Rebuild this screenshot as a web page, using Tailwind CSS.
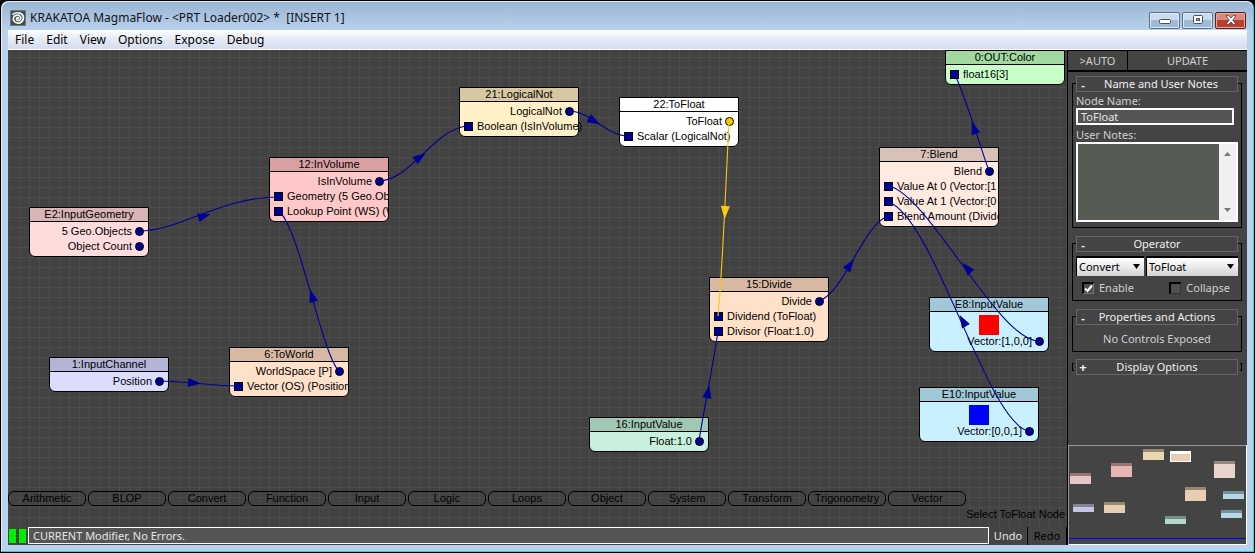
<!DOCTYPE html>
<html lang="en">
<head>
<meta charset="utf-8">
<title>KRAKATOA MagmaFlow</title>
<script src="https://cdn.jsdelivr.net/npm/@tailwindcss/browser@4"></script>
</head>
<body class="bg-black font-['Noto_Sans',sans-serif] text-[11px] leading-4">
<div class="flex h-screen flex-col rounded-t-lg border border-black border-r-[#101010] bg-[#bad2ec] shadow-[inset_-1px_-1px_0_#30c8e4,inset_1px_1px_0_#e4eefa]">

  <!-- Title bar -->
  <header class="mx-px mt-px flex h-7 shrink-0 items-center rounded-t-lg bg-linear-to-b from-[#9bb5d4] to-[#b9d1eb] pr-[7px] pl-2">
    <svg class="mt-1 size-4 shrink-0" viewBox="0 0 16 16">
      <rect width="16" height="16" rx="1.5" fill="#3f4d50"/>
      <rect x=".5" y=".5" width="15" height="15" rx="1.5" fill="none" stroke="#6d7c80"/>
      <path d="M3 4.200C6.500 1.500 13.600 2.700 13.400 7.900 13.200 13.200 7.500 14.500 4.500 11.600 2 9 3.700 5.200 7.400 5.200 10.500 5.200 11.600 8 10.200 9.800 8.900 11.300 6.300 10.600 6.500 8.800 6.700 7.500 8.200 7.400 8.500 8.400" fill="none" stroke="#f4f8f8" stroke-width="1.700" stroke-linecap="round"/>
    </svg>
    <h1 class="mt-1 ml-1 flex-1 text-[12px] whitespace-pre text-[#101418]">KRAKATOA MagmaFlow - &lt;PRT Loader002&gt; *  [INSERT 1]</h1>
    <div class="mt-2 flex gap-[2px]">
      <button aria-label="Minimize" class="flex h-[17px] w-[31px] items-center justify-center rounded-[2px] border border-[#5c7088] bg-linear-to-b from-[#c9dbee] from-50% to-[#9fb9d6] to-50% shadow-[inset_0_0_0_1px_#dce9f6]"><svg width="12" height="10"><rect x=".5" y="4.500" width="11" height="4" rx="1" fill="#fff" stroke="#4a5262"/></svg></button>
      <button aria-label="Maximize" class="flex h-[17px] w-[31px] items-center justify-center rounded-[2px] border border-[#5c7088] bg-linear-to-b from-[#c9dbee] from-50% to-[#9fb9d6] to-50% shadow-[inset_0_0_0_1px_#dce9f6]"><svg width="12" height="10"><rect x="1.500" y=".5" width="9" height="8" rx="1" fill="#fff" stroke="#4a5262"/><rect x="4.500" y="3.500" width="3" height="2" fill="#a9bfd9" stroke="#4a5262"/></svg></button>
      <button aria-label="Close" class="flex h-[17px] w-[31px] items-center justify-center rounded-[2px] border border-[#5a1d1d] bg-linear-to-b from-[#d98a7c] from-50% to-[#bf3d29] to-50% shadow-[inset_0_0_0_1px_#e8aa9e]"><svg width="12" height="10" viewBox="0 0 12 10"><path d="M1 .7h3l2 2.300 2-2.300h3L7.800 5l3.200 4.300H8L6 7 4 9.300H1L4.200 5z" fill="#fff" stroke="#4a4a5a" stroke-width=".9"/></svg></button>
    </div>
  </header>

  <div class="mr-[7px] mb-[7px] ml-[7px] flex min-h-0 flex-1 flex-col">
    <!-- Menu -->
    <nav class="flex h-5 shrink-0 items-center gap-3 border-b border-white bg-linear-to-b from-white via-[#e4eaf5] to-[#d5dcee] pl-[7px] text-[12px] text-black">
      <button>File</button><button>Edit</button><button>View</button><button>Options</button><button>Expose</button><button>Debug</button>
    </nav>

    <div class="flex min-h-0 flex-1">
      <main class="flex min-w-0 flex-1 flex-col bg-[#444]">
        <!-- Flow canvas -->
        <section aria-label="Flow" class="relative flex min-h-0 flex-1 flex-col justify-end overflow-hidden bg-[#424242] bg-[linear-gradient(#4c4c4c_1px,transparent_1px),linear-gradient(90deg,#4c4c4c_1px,transparent_1px)] bg-size-[10px_10px] bg-position-[1px_7px] font-['Liberation_Sans',Arial,sans-serif] text-black">

          <article class="absolute top-[157px] left-[21px] w-[120px] overflow-hidden rounded-b-md border border-black bg-[#ffdcdc] leading-[13px]">
            <h2 class="h-[14px] border-b border-black bg-[#d8b4b4] text-center">E2:InputGeometry</h2>
            <div class="py-[2px] whitespace-nowrap">
              <div class="flex h-[15px] items-center justify-end gap-[3px] pr-1"><span class="pb-px">5 Geo.Objects</span><i class="size-[9px] rounded-full border border-black bg-[#000096]"></i></div>
              <div class="flex h-[15px] items-center justify-end gap-[3px] pr-1"><span class="pb-px">Object Count</span><i class="size-[9px] rounded-full border border-black bg-[#000096]"></i></div>
            </div>
          </article>

          <article class="absolute top-[107px] left-[261px] w-[120px] overflow-hidden rounded-b-md border border-black bg-[#ffc8c8] leading-[13px]">
            <h2 class="h-[14px] border-b border-black bg-[#d8a0a0] text-center">12:InVolume</h2>
            <div class="py-[2px] whitespace-nowrap">
              <div class="flex h-[15px] items-center justify-end gap-[3px] pr-1"><span class="pb-px">IsInVolume</span><i class="size-[9px] rounded-full border border-black bg-[#000096]"></i></div>
              <div class="flex h-[15px] items-center gap-1 pl-1"><i class="size-[9px] shrink-0 border border-black bg-[#000096]"></i><span class="pb-px">Geometry (5 Geo.Obj</span></div>
              <div class="flex h-[15px] items-center gap-1 pl-1"><i class="size-[9px] shrink-0 border border-black bg-[#000096]"></i><span class="pb-px">Lookup Point (WS) (W</span></div>
            </div>
          </article>

          <article class="absolute top-[37px] left-[451px] w-[120px] rounded-b-md border border-black bg-[#fff0c8] leading-[13px]">
            <h2 class="h-[14px] border-b border-black bg-[#d8c8a0] text-center">21:LogicalNot</h2>
            <div class="py-[2px] whitespace-nowrap">
              <div class="flex h-[15px] items-center justify-end gap-[3px] pr-1"><span class="pb-px">LogicalNot</span><i class="size-[9px] rounded-full border border-black bg-[#000096]"></i></div>
              <div class="flex h-[15px] items-center gap-1 pl-1"><i class="size-[9px] shrink-0 border border-black bg-[#000096]"></i><span class="pb-px">Boolean (IsInVolume)</span></div>
            </div>
          </article>

          <article class="absolute top-[47px] left-[611px] w-[120px] overflow-hidden rounded-b-md border border-black bg-white leading-[13px]">
            <h2 class="h-[14px] border-b border-black text-center">22:ToFloat</h2>
            <div class="py-[2px] whitespace-nowrap">
              <div class="flex h-[15px] items-center justify-end gap-[3px] pr-1"><span class="pb-px">ToFloat</span><i class="size-[9px] rounded-full border border-black bg-[#ffc80a]"></i></div>
              <div class="flex h-[15px] items-center gap-1 pl-1"><i class="size-[9px] shrink-0 border border-black bg-[#000096]"></i><span class="pb-px">Scalar (LogicalNot)</span></div>
            </div>
          </article>

          <article class="absolute top-[307px] left-[41px] w-[120px] overflow-hidden rounded-b-md border border-black bg-[#dcdcff] leading-[13px]">
            <h2 class="h-[14px] border-b border-black bg-[#b4b4d8] text-center">1:InputChannel</h2>
            <div class="py-[2px] whitespace-nowrap">
              <div class="flex h-[15px] items-center justify-end gap-[3px] pr-1"><span class="pb-px">Position</span><i class="size-[9px] rounded-full border border-black bg-[#000096]"></i></div>
            </div>
          </article>

          <article class="absolute top-[297px] left-[221px] w-[120px] overflow-hidden rounded-b-md border border-black bg-[#ffe0c8] leading-[13px]">
            <h2 class="h-[14px] border-b border-black bg-[#d8b8a0] text-center">6:ToWorld</h2>
            <div class="py-[2px] whitespace-nowrap">
              <div class="flex h-[15px] items-center justify-end gap-[3px] pr-1"><span class="pb-px">WorldSpace [P]</span><i class="size-[9px] rounded-full border border-black bg-[#000096]"></i></div>
              <div class="flex h-[15px] items-center gap-1 pl-1"><i class="size-[9px] shrink-0 border border-black bg-[#000096]"></i><span class="pb-px">Vector (OS) (Position</span></div>
            </div>
          </article>

          <article class="absolute top-[227px] left-[701px] w-[120px] overflow-hidden rounded-b-md border border-black bg-[#ffe0c8] leading-[13px]">
            <h2 class="h-[14px] border-b border-black bg-[#d8b8a0] text-center">15:Divide</h2>
            <div class="py-[2px] whitespace-nowrap">
              <div class="flex h-[15px] items-center justify-end gap-[3px] pr-1"><span class="pb-px">Divide</span><i class="size-[9px] rounded-full border border-black bg-[#000096]"></i></div>
              <div class="flex h-[15px] items-center gap-1 pl-1"><i class="size-[9px] shrink-0 border border-black bg-[#000096]"></i><span class="pb-px">Dividend (ToFloat)</span></div>
              <div class="flex h-[15px] items-center gap-1 pl-1"><i class="size-[9px] shrink-0 border border-black bg-[#000096]"></i><span class="pb-px">Divisor (Float:1.0)</span></div>
            </div>
          </article>

          <article class="absolute top-[367px] left-[581px] w-[120px] overflow-hidden rounded-b-md border border-black bg-[#c8f0dc] leading-[13px]">
            <h2 class="h-[14px] border-b border-black bg-[#a0c8b4] text-center">16:InputValue</h2>
            <div class="py-[2px] whitespace-nowrap">
              <div class="flex h-[15px] items-center justify-end gap-[3px] pr-1"><span class="pb-px">Float:1.0</span><i class="size-[9px] rounded-full border border-black bg-[#000096]"></i></div>
            </div>
          </article>

          <article class="absolute top-[97px] left-[871px] w-[120px] overflow-hidden rounded-b-md border border-black bg-[#ffeae0] leading-[13px]">
            <h2 class="h-[14px] border-b border-black bg-[#d8c2b8] text-center">7:Blend</h2>
            <div class="py-[2px] whitespace-nowrap">
              <div class="flex h-[15px] items-center justify-end gap-[3px] pr-1"><span class="pb-px">Blend</span><i class="size-[9px] rounded-full border border-black bg-[#000096]"></i></div>
              <div class="flex h-[15px] items-center gap-1 pl-1"><i class="size-[9px] shrink-0 border border-black bg-[#000096]"></i><span class="pb-px">Value At 0 (Vector:[1</span></div>
              <div class="flex h-[15px] items-center gap-1 pl-1"><i class="size-[9px] shrink-0 border border-black bg-[#000096]"></i><span class="pb-px">Value At 1 (Vector:[0</span></div>
              <div class="flex h-[15px] items-center gap-1 pl-1"><i class="size-[9px] shrink-0 border border-black bg-[#000096]"></i><span class="pb-px">Blend Amount (Divide</span></div>
            </div>
          </article>

          <article class="absolute top-[247px] left-[921px] w-[120px] overflow-hidden rounded-b-md border border-black bg-[#c8f0ff] leading-[13px]">
            <h2 class="h-[14px] border-b border-black bg-[#a0c8d8] text-center">E8:InputValue</h2>
            <div class="py-[3px] whitespace-nowrap">
              <div class="mx-auto size-5 bg-[#ff0000]"></div>
              <div class="flex h-[13px] items-center justify-end gap-[3px] pr-1"><span class="pb-px">Vector:[1,0,0]</span><i class="size-[9px] rounded-full border border-black bg-[#000096]"></i></div>
            </div>
          </article>

          <article class="absolute top-[337px] left-[911px] w-[120px] overflow-hidden rounded-b-md border border-black bg-[#c8f0ff] leading-[13px]">
            <h2 class="h-[14px] border-b border-black bg-[#a0c8d8] text-center">E10:InputValue</h2>
            <div class="py-[3px] whitespace-nowrap">
              <div class="mx-auto size-5 bg-[#0000ff]"></div>
              <div class="flex h-[13px] items-center justify-end gap-[3px] pr-1"><span class="pb-px">Vector:[0,0,1]</span><i class="size-[9px] rounded-full border border-black bg-[#000096]"></i></div>
            </div>
          </article>

          <article class="absolute top-0 left-[937px] w-[120px] overflow-hidden rounded-b-md border border-black bg-[#c8ffc8] leading-[13px]">
            <h2 class="h-[14px] border-b border-black bg-[#a0d8a0] text-center">0:OUT:Color</h2>
            <div class="py-[2px] whitespace-nowrap">
              <div class="flex h-[15px] items-center gap-1 pl-1"><i class="size-[9px] shrink-0 border border-black bg-[#000096]"></i><span class="pb-px">float16[3]</span></div>
            </div>
          </article>

          <!-- Wires between the ports -->
          <svg class="pointer-events-none absolute top-0 left-0 size-full" aria-hidden="true">
            <defs><path id="tip" d="M-6-4.500 7 0-6 4.500z"/></defs>
            <g transform="translate(-8 -50)" fill="none" stroke="#000096" stroke-width="1.100">
              <path d="M139 231C180 231 220 197 278 197"/>
              <path d="M339 371C322 355 300 230 279 211"/>
              <path d="M159 381C185 381 212 386 238 386"/>
              <path d="M379 181C410 181 436 127 468 126"/>
              <path d="M569 111C590 111 605 135 628 136"/>
              <path d="M699 441C702 420 714 360 718 331"/>
              <path d="M819 301C845 292 862 226 888 216"/>
              <path d="M989 171C983 155 965 95 955 75"/>
              <path d="M1039 341C998 341 930 196 889 186"/>
              <path d="M1029 431C988 425 935 220 889 202"/>
              <path d="M729 121C727 160 722 280 718 316" stroke="#ffc80a"/>
            </g>
            <g transform="translate(-8 -50)" fill="#000096">
              <use href="#tip" transform="translate(204 216) rotate(-17)"/>
              <use href="#tip" transform="translate(312 296) rotate(-107)"/>
              <use href="#tip" transform="translate(194 383) rotate(4)"/>
              <use href="#tip" transform="translate(420 157) rotate(-36)"/>
              <use href="#tip" transform="translate(594 121) rotate(30)"/>
              <use href="#tip" transform="translate(708 392) rotate(-80)"/>
              <use href="#tip" transform="translate(850 265) rotate(-54)"/>
              <use href="#tip" transform="translate(974 128) rotate(-109)"/>
              <use href="#tip" transform="translate(967 268) rotate(-132)"/>
              <use href="#tip" transform="translate(963 321) rotate(-119)"/>
              <use href="#tip" transform="translate(725 212) rotate(93)" fill="#ffc80a"/>
            </g>
          </svg>

          <!-- Operator categories -->
          <div class="flex gap-[2px] leading-[13px]">
            <button class="w-[78px] rounded-md border border-black">Arithmetic</button>
            <button class="w-[78px] rounded-md border border-black">BLOP</button>
            <button class="w-[78px] rounded-md border border-black">Convert</button>
            <button class="w-[78px] rounded-md border border-black">Function</button>
            <button class="w-[78px] rounded-md border border-black">Input</button>
            <button class="w-[78px] rounded-md border border-black">Logic</button>
            <button class="w-[78px] rounded-md border border-black">Loops</button>
            <button class="w-[78px] rounded-md border border-black">Object</button>
            <button class="w-[78px] rounded-md border border-black">System</button>
            <button class="w-[78px] rounded-md border border-black">Transform</button>
            <button class="w-[78px] rounded-md border border-black">Trigonometry</button>
            <button class="w-[78px] rounded-md border border-black">Vector</button>
          </div>
          <p class="pr-[2px] pb-[5px] text-right">Select ToFloat Node</p>
        </section>

        <!-- Status line -->
        <footer class="flex h-[18px] shrink-0 items-stretch bg-[#444] text-[#e4e4e4]">
          <div class="flex items-center gap-[3px] pr-[2px] pl-px"><i class="h-[14px] w-[7px] bg-[#00f000]"></i><i class="h-[14px] w-[7px] bg-[#00f000]"></i></div>
          <input aria-label="Status" readonly value="CURRENT Modifier, No Errors." class="mb-px min-w-0 flex-1 border border-white bg-[#555] px-1">
          <button class="w-[39px] border-r border-black">Undo</button>
          <button class="w-[39px] border-r border-black text-black" disabled>Redo</button>
        </footer>
      </main>

      <!-- Side panel -->
      <aside class="flex w-[180px] shrink-0 flex-col border-l border-black bg-[#444] text-[#d0d0d0]">
        <div class="flex h-[22px] shrink-0 border-y border-b-2 border-black">
          <button class="w-[60px] border-r border-black">&gt;AUTO</button>
          <button class="flex-1">UPDATE</button>
        </div>
        <div class="flex flex-1 flex-col gap-[15px] pt-[11px] pr-[5px] pl-1">
          <section class="flex flex-col border border-black px-[3px] pb-[5px]">
            <h2 class="-mt-2 flex h-4 items-center border border-[#666] bg-[#444] text-[#f0f0f0]"><button class="w-3 text-center leading-none font-bold" aria-label="Collapse Name and User Notes">-</button><span class="flex-1 pr-1 text-center">Name and User Notes</span></h2>
            <label for="node" class="mt-px leading-[15px]">Node Name:</label>
            <input id="node" value="ToFloat" class="mr-1 h-[17px] border-2 border-white bg-[#555] px-[3px] text-[#e4e4e4]">
            <label for="notes" class="mt-[2px] leading-[15px]">User Notes:</label>
            <div class="flex h-[80px] border-2 border-white bg-[#f0f0f0]">
              <textarea id="notes" class="min-w-0 flex-1 resize-none bg-[#565b54]"></textarea>
              <div class="flex w-[17px] flex-col items-center justify-between py-2">
                <svg width="7" height="4"><path d="M0 4 3.500 0 7 4z" fill="#777"/></svg>
                <svg width="7" height="4"><path d="M0 0h7L3.500 4z" fill="#777"/></svg>
              </div>
            </div>
          </section>
          <section class="flex flex-col border border-black px-[3px] pb-1">
            <h2 class="-mt-2 flex h-4 items-center border border-[#666] bg-[#444] text-[#f0f0f0]"><button class="w-3 text-center leading-none font-bold" aria-label="Collapse Operator">-</button><span class="flex-1 pr-3 text-center">Operator</span></h2>
            <div class="mt-1 flex gap-[2px] text-black">
              <div class="relative w-[68px]"><select aria-label="Category" class="h-5 w-full appearance-none border-t-2 border-l border-black bg-linear-to-b from-white to-[#d4d4d4] pl-[2px]"><option>Convert</option></select><svg class="pointer-events-none absolute top-2 right-1" width="7" height="5"><path d="M0 0h7L3.500 5z"/></svg></div>
              <div class="relative flex-1"><select aria-label="Operation" class="h-5 w-full appearance-none border-t-2 border-l border-black bg-linear-to-b from-white to-[#d4d4d4] pl-[2px]"><option>ToFloat</option></select><svg class="pointer-events-none absolute top-2 right-1" width="7" height="5"><path d="M0 0h7L3.500 5z"/></svg></div>
            </div>
            <div class="mt-1 flex justify-between pr-2 pl-[6px]">
              <label class="flex items-center gap-[5px]"><span class="relative flex"><input type="checkbox" checked class="size-3 appearance-none border border-t-2 border-l-2 border-[#777] border-t-black border-l-black bg-[#505050]"><svg class="pointer-events-none absolute top-0 left-0" width="12" height="12"><path d="M3 6.500 5.500 9 10 3.500" fill="none" stroke="#fff" stroke-width="2"/></svg></span>Enable</label>
              <label class="flex items-center gap-[5px]"><input type="checkbox" class="size-3 appearance-none border border-t-2 border-l-2 border-[#333] border-t-black border-l-black bg-[#505050]">Collapse</label>
            </div>
          </section>
          <section class="flex flex-col border border-black px-[3px] pb-1">
            <h2 class="-mt-2 flex h-4 items-center border border-[#666] bg-[#444] text-[#f0f0f0]"><button class="w-3 text-center leading-none font-bold" aria-label="Collapse Properties and Actions">-</button><span class="flex-1 pr-3 text-center">Properties and Actions</span></h2>
            <p class="mt-[6px] text-center">No Controls Exposed</p>
          </section>
          <section class="-mt-2 flex h-4 items-center">
            <span class="h-2 w-[2px] border border-r-0 border-black"></span>
            <h2 class="mx-[2px] flex h-4 flex-1 items-center border border-[#666] bg-[#444] text-[#f0f0f0]"><button class="w-3 text-center text-[13px] leading-none font-bold" aria-label="Expand Display Options">+</button><span class="flex-1 pr-3 text-center">Display Options</span></h2>
            <span class="h-2 w-[2px] border border-l-0 border-black"></span>
          </section>
        </div>
        <!-- Overview map -->
        <div class="h-[100px] shrink-0 border border-t-[#999] border-r-white border-b-white border-l-[#999]">
          <svg class="size-full" viewBox="1069 446 177 98" preserveAspectRatio="none" aria-label="Overview">
            <g fill="#e8d8b0">
              <path d="M1143 452h21v8h-21z"/><path d="M1070 476h21v8h-21z" fill="#e8c4c4"/><path d="M1111 466h21v11h-21z" fill="#e8b4b4"/><path d="M1214 464h21v14h-21z" fill="#e8d4c8"/><path d="M1185 490h21v11h-21z" fill="#e8ccb4"/><path d="M1104 505h21v8h-21z" fill="#e8ccb4"/><path d="M1073 507h21v5h-21z" fill="#c8c4e8"/><path d="M1165 519h21v5h-21z" fill="#b4d8c8"/><path d="M1223 494h21v5h-21z" fill="#b4d8e8"/><path d="M1221 513h21v5h-21z" fill="#b4d8e8"/>
              <path d="M1170 451h21v11h-21z" fill="#fff"/><path d="M1171 454h19v7h-19z" fill="#e8ccb4"/>
            </g>
            <path fill="#988870" d="M1143 449h21v3h-21zM1185 487h21v3h-21zM1104 502h21v3h-21z"/>
            <path fill="#987474" d="M1070 473h21v3h-21zM1111 463h21v3h-21z"/>
            <path fill="#988884" d="M1214 461h21v3h-21z"/>
            <path fill="#848498" d="M1073 504h21v3h-21z"/>
            <path fill="#749084" d="M1165 516h21v3h-21z"/>
            <path fill="#749098" d="M1223 491h21v3h-21zM1221 510h21v3h-21z"/>
            <path fill="#00f" d="M1069 538h177v1h-177z"/>
          </svg>
        </div>
      </aside>
    </div>
  </div>
</div>
</body>
</html>
